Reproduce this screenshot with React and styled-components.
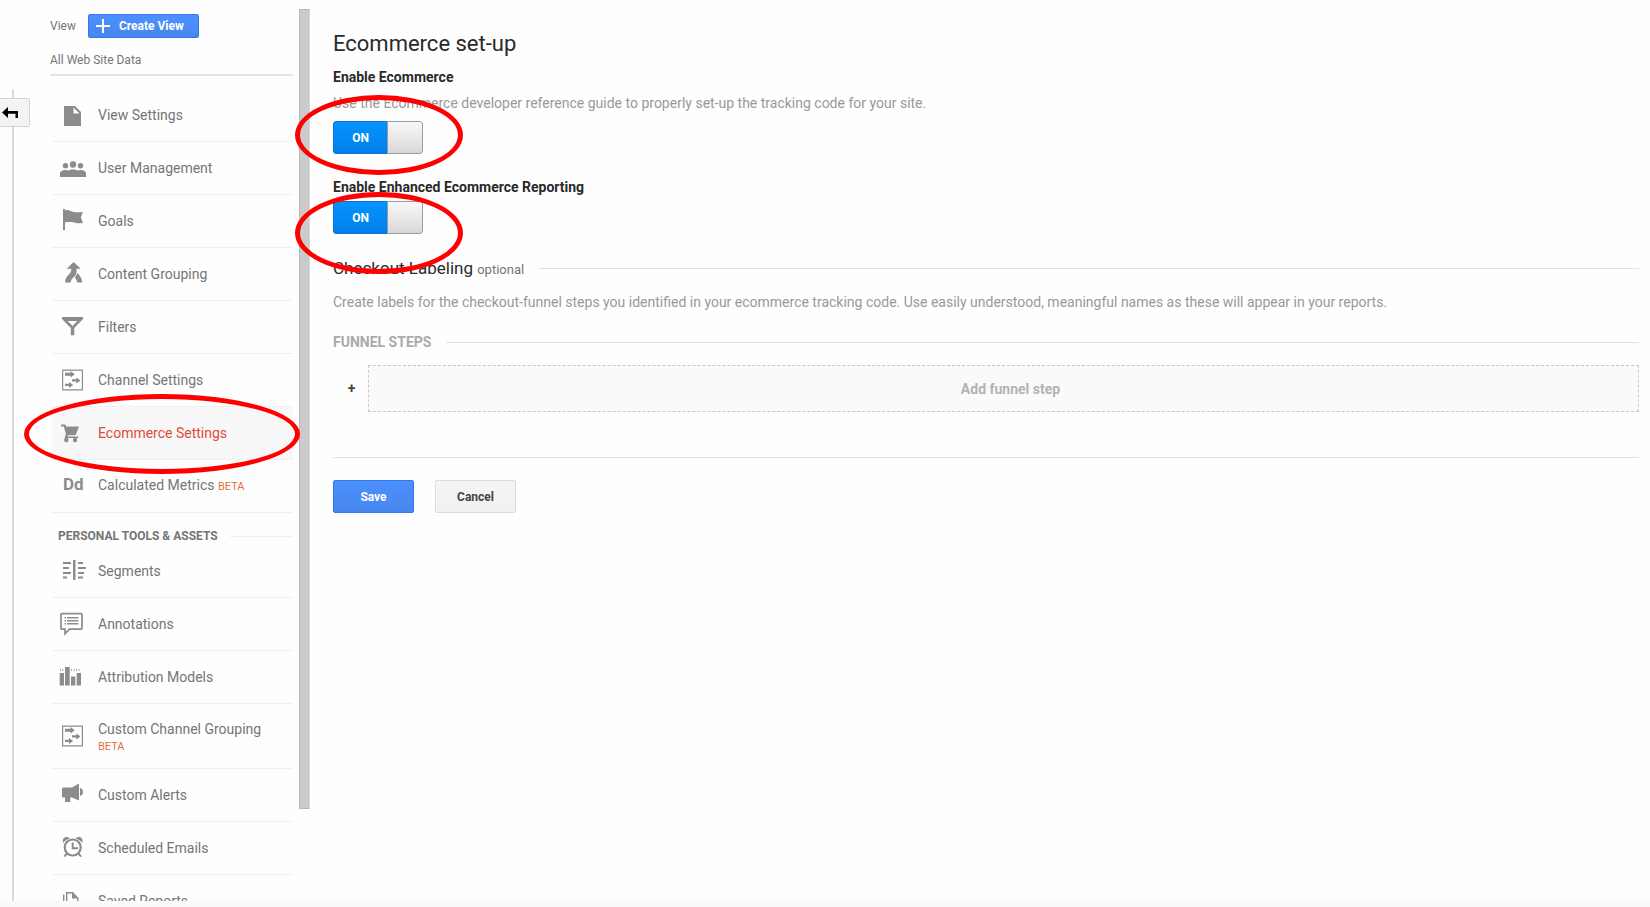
import React, { useState } from "react";
import styled, { createGlobalStyle, css } from "styled-components";

const GlobalStyle = createGlobalStyle`
  * {
    box-sizing: border-box;
  }

  body {
    margin: 0;
    background: #fefefe;
    color: #2a2a2a;
    font-family: Roboto, "Liberation Sans", sans-serif;
    font-size: 14px;
    line-height: 20px;
  }

  button {
    font-family: inherit;
    cursor: pointer;
  }
`;

const Page = styled.div`
  display: grid;
  grid-template-rows: minmax(0, 1fr) 6px;
  height: 100vh;
`;

const Columns = styled.div`
  display: grid;
  grid-template-columns: 30px 243px 11px minmax(0, 1fr);
  min-height: 0;
  overflow: hidden;
`;

const Footer = styled.footer`
  background: #f8f9fb;
`;

/* left rail */

const Rail = styled.div`
  display: flex;
  flex-direction: column;
  padding-top: 89px;
`;

const RailLine = styled.span`
  width: 2px;
  margin-left: 12px;
  background: #dadada;
  flex: ${props => (props.$grow ? "1" : "0 0 9px")};
`;

const BackButton = styled.button`
  display: flex;
  align-items: center;
  height: 29px;
  padding: 0 0 0 2px;
  border: 1px solid #d4d4d4;
  border-left: 0;
  border-radius: 0 2px 2px 0;
  background: #f3f3f3;
`;

/* sidebar */

const Sidebar = styled.aside`
  min-height: 0;
  margin-left: 20px;
  margin-right: -20px;
  padding-top: 14px;
`;

const ViewHeader = styled.div`
  border-bottom: 2px solid #e3e3e3;
  padding-bottom: 6px;
  margin-bottom: 13px;
  color: #757575;
  font-size: 12px;
  line-height: 16px;
`;

const ViewRow = styled.div`
  display: flex;
  align-items: center;
  gap: 12px;
  margin-bottom: 14px;
`;

const CreateButton = styled.button`
  display: flex;
  align-items: center;
  gap: 9px;
  height: 24px;
  padding: 0 14px 0 7px;
  border: 1px solid #3079ed;
  border-radius: 2px;
  background: linear-gradient(#4d90fe, #4787ed);
  color: #fff;
  font-size: 12px;
  font-weight: bold;
`;

const Menu = styled.ul`
  list-style: none;
  margin: 0 0 0 2px;
  padding: 0;
`;

const MenuItem = styled.li`
  position: relative;
  border-bottom: 1px solid #efefef;
  background: ${props => (props.$active ? "#f8f8f8" : "transparent")};
`;

const MenuLink = styled.a`
  display: flex;
  align-items: center;
  gap: 12px;
  height: ${props => (props.$tall ? "64px" : "52px")};
  padding-left: 6px;
  color: ${props => (props.$active ? "#dd4b39" : "#757575")};
  line-height: 18px;
  text-decoration: none;
`;

const MenuText = styled.span`
  padding-top: ${props => (props.$tall ? "4px" : "0")};
`;

const MenuIcon = styled.svg`
  flex: none;
  width: 28px;
  height: 24px;
  overflow: visible;
  fill: #8c8c8c;
`;

const LetterIcon = styled.span`
  flex: none;
  width: 28px;
  padding: 0 0 4px 5px;
  color: #8c8c8c;
  font-size: 17px;
  font-weight: bold;
`;

const Beta = styled.span`
  display: ${props => (props.$block ? "block" : "inline")};
  color: #e2703a;
  font-size: 11px;
`;

const MenuHeading = styled.h2`
  display: flex;
  align-items: center;
  gap: 12px;
  margin: 0 0 0 8px;
  padding: 15px 0 1px;
  color: #757575;
  font-size: 12px;
  line-height: 16px;
  font-weight: bold;

  &::after {
    content: "";
    flex: 1;
    height: 1px;
    background: #efefef;
  }
`;

const ScrollBar = styled.div`
  margin: 9px -26px 92px 26px;
  border: 1px solid #b8b8b8;
  border-right-color: #d8d8d8;
  background: #cbcbcb;
`;

/* settings form */

const Main = styled.main`
  margin-left: 49px;
  padding: 30px 11px 0 0;
`;

const Title = styled.h1`
  margin: 0 0 9px;
  font-size: 22px;
  line-height: 28px;
  font-weight: normal;
`;

const FieldLabel = styled.label`
  display: block;
  font-weight: bold;
`;

const Hint = styled.p`
  margin: 0;
  color: #999;
`;

const Field = styled.div`
  display: flex;
  flex-direction: column;
  align-items: flex-start;
  margin-bottom: 23px;

  ${Hint} {
    margin: 6px 0 4px;
  }
`;

const Switch = styled.span`
  position: relative;
  display: flex;
  width: 90px;
  height: 33px;
  margin-top: 4px;
`;

const SwitchInput = styled.input`
  position: absolute;
  inset: 0;
  width: 100%;
  height: 100%;
  margin: 0;
  opacity: 0;
  cursor: pointer;
`;

const SwitchTrack = styled.span`
  display: flex;
  flex: 1;
  flex-direction: ${props => (props.$on ? "row" : "row-reverse")};
  overflow: hidden;
  border-radius: 3px;
`;

const SwitchText = styled.span`
  flex: 1;
  border: 1px solid #0a74cf;
  border-right: 0;
  border-radius: 3px 0 0 3px;
  background: ${props =>
    props.$on ? "linear-gradient(#0593ff, #0080ea)" : "#aaa"};
  color: #fff;
  font-size: 12px;
  line-height: 32px;
  font-weight: bold;
  text-align: center;
`;

const SwitchKnob = styled.span`
  width: 36px;
  border: 1px solid #999;
  border-radius: 0 3px 3px 0;
  background: linear-gradient(#f8f8f8, #d8d8d8);
`;

const SectionHeading = styled.h2`
  display: flex;
  align-items: center;
  gap: 15px;
  margin: 0;

  &::after {
    content: "";
    flex: 1;
    height: 1px;
    background: #e0e0e0;
  }

  ${props =>
    props.$minor
      ? css`
          color: #aaa;
          font-size: 14px;
          line-height: 20px;
          font-weight: bold;
        `
      : css`
          font-size: 17px;
          line-height: 22px;
          font-weight: normal;
        `}
`;

const Optional = styled.small`
  color: #757575;
  font-size: 13px;
  line-height: 16px;
`;

const Checkout = styled.section`
  display: flex;
  flex-direction: column;
  border-bottom: 1px solid #e0e0e0;
  padding-bottom: 45px;
  margin-bottom: 22px;

  ${Hint} {
    margin: 13px 0 20px;
  }
`;

const StepRow = styled.div`
  display: flex;
  align-items: center;
  margin-top: 13px;
`;

const StepMark = styled.span`
  width: 35px;
  padding: 0 0 2px 2px;
  color: #444;
  text-align: center;
  font-weight: bold;
`;

const AddStep = styled.button`
  flex: 1;
  height: 47px;
  border: 1px dashed #c8c8c8;
  background: #fafafa;
  color: #b3b3b3;
  font-size: 14px;
  font-weight: bold;
  padding-left: 20px;
`;

const Actions = styled.div`
  display: flex;
  gap: 21px;
`;

const Button = styled.button`
  min-width: 81px;
  height: 33px;
  border: 1px solid ${props => (props.$primary ? "#3079ed" : "#dcdcdc")};
  border-radius: 2px;
  background: ${props =>
    props.$primary
      ? "linear-gradient(#4d90fe, #4787ed)"
      : "linear-gradient(#f5f5f5, #f1f1f1)"};
  color: ${props => (props.$primary ? "#fff" : "#444")};
  font-size: 12px;
  font-weight: bold;
`;

/* red ring laid over the part it surrounds */
const Marker = styled.span`
  position: absolute;
  z-index: 2;
  border: 5px solid #fe0000;
  border-radius: 50%;
  pointer-events: none;
  inset: ${props => props.$inset};
`;

const icons = {
  file: <path fillRule="evenodd" d="M6 3h11l6 6v14H6zM15.500 4.500v6h6z" />,
  users: (
    <>
      <circle cx="15" cy="8.500" r="3.200" />
      <circle cx="7.500" cy="9.700" r="2.700" />
      <circle cx="22.500" cy="9.700" r="2.700" />
      <path d="M2 21v-3.500c0-2.200 2.500-3.500 5.500-3.500 1 0 2 .2 2.700.6 1.200-.7 2.800-1.100 4.800-1.100s3.600.4 4.800 1.100c.7-.4 1.700-.6 2.700-.6 3 0 5.500 1.300 5.500 3.500V21z" />
    </>
  ),
  flag: (
    <path d="M5 0h2v1.500c3-1.300 5.500.8 9 1.500 3 .6 6 .3 9 0l-2.200 5.200L25 14c-3 .5-5 .5-9-.5-3-.8-6-.5-9-.2V21H5z" />
  ),
  merge: (
    <>
      <path d="M15.700 0l7 6.700h-4.200v2.500c0 2.500-.9 4.200-2.600 5.900-2 2-3 3-3.200 5.400H7c.2-4 1.500-6 4-8.300 1.600-1.500 2.200-2.700 2.200-4.500v-1H8.700z" />
      <path d="M19.300 11c3 2.700 4.600 5.200 4.800 9.500H19c-.1-2.200-.8-3.600-2.200-5.200 1.200-1.300 1.900-2.600 2.500-4.300z" />
    </>
  ),
  filter: (
    <path
      fillRule="evenodd"
      d="M4 2h21v2l-8.700 9v7.300h-3.500V13L4 4zM9.700 6l4.800 5 4.800-5z"
    />
  ),
  channel: (
    <>
      <path
        fillRule="evenodd"
        d="M4 1.500h21v21H4zM5.200 2.700v18.600h18.600V2.700z"
      />
      <path d="M7 4.700h5.500V3l4.300 3.200-4.300 3.200V7.700H7zM14 11.200h4.300V9.400l4.200 3-4.200 3v-1.800H14zM7 15.700h4v-1.800l4.200 3-4.200 3v-1.800H7z" />
    </>
  ),
  cart: (
    <>
      <path d="M3 3.500h4.200l1 2H21l-3 7.700c-.4.700-.8 1-1.600 1H10l-.7 1.200h11V17H8c-1 0-1.500-.9-1-1.800l1-2-2.200-7.700H3z" />
      <circle cx="8.300" cy="19" r="2.200" />
      <circle cx="17" cy="19" r="2.200" />
    </>
  ),
  segments: (
    <path d="M15 1h2.500v20H15zM5 3h8v2H5zM5 8h6v2H5zM5 13h8v2H5zM5 17.500h4v2H5zM20 3h5v2h-5zM20 8h8v2h-8zM20 13h6v2h-6zM20 17.500h5v2h-5z" />
  ),
  annotation: (
    <>
      <path
        d="M4 1.700h19c.5 0 1 .3 1 .8v13.800c0 .5-.5.900-1 .9H11.500L7 21.700v-4.500H4c-.5 0-1-.4-1-.9V2.500c0-.5.5-.8 1-.8z"
        fill="none"
        stroke="#8c8c8c"
        strokeWidth="1.700"
      />
      <path d="M6.500 5H8v1.500H6.500zM9 5h11.500v1.500H9zM6.500 8H8v1.500H6.500zM9 8h11.500v1.500H9zM6.500 11H8v1.500H6.500zM9 11h11.500v1.500H9z" />
    </>
  ),
  bars: (
    <path d="M1.700 8H6v12.500H1.700zM7 2h4.700v18.500H7zM13 11.500h4.300v9H13zM18.700 8H23v12.500h-4.300zM2 4.300h1v1.400H2zM4.300 4.300h1v1.400h-1zM13 4.300h1v1.400h-1zM15.500 4.300h1v1.400h-1zM18 4.300h1v1.400h-1zM20.500 4.300h1v1.400h-1z" />
  ),
  megaphone: (
    <path d="M5.500 4.500H14l7-4v17L14 14.500h-1.800V19H7v-4.500H5.500c-.9 0-1.500-.5-1.500-1.500V6c0-.9.6-1.500 1.500-1.500zM22 4.700c1.800.6 3 2.200 3 4.200s-1.200 3.600-3 4.200z" />
  ),
  alarm: (
    <>
      <circle cx="14.700" cy="11.500" r="8" fill="none" stroke="#8c8c8c" strokeWidth="2.200" />
      <path d="M13.700 6.500h2v4.700h4.300v2h-6.300z" />
      <path d="M5.200 7C4 3.500 5.700 1 8.500 1c1.500 0 2.700.6 3.400 1.500C9 3.400 6.700 4.800 5.200 7zM24.200 7c1.200-3.500-.5-6-3.300-6-1.500 0-2.700.6-3.400 1.500 2.900.9 5.200 2.300 6.700 4.500zM8 17l1.600 1.500L7 21l-1.500-.8zM21.400 17l-1.600 1.500 2.600 2.500 1.500-.8z" />
    </>
  ),
  reports: (
    <path
      fillRule="evenodd"
      d="M8 3h7l5.500 6v11H8zM9.400 4.400v14.200h9.700V9.500H14V4.400zM5 5.500h1.400v17H17V24H5z"
    />
  )
};

const viewItems = [
  { label: "View Settings", icon: "file" },
  { label: "User Management", icon: "users" },
  { label: "Goals", icon: "flag" },
  { label: "Content Grouping", icon: "merge" },
  { label: "Filters", icon: "filter" },
  { label: "Channel Settings", icon: "channel" },
  { label: "Ecommerce Settings", icon: "cart", active: true },
  { label: "Calculated Metrics", letters: "Dd", beta: "inline" }
];

const personalItems = [
  { label: "Segments", icon: "segments" },
  { label: "Annotations", icon: "annotation" },
  { label: "Attribution Models", icon: "bars" },
  { label: "Custom Channel Grouping", icon: "channel", beta: "block" },
  { label: "Custom Alerts", icon: "megaphone" },
  { label: "Scheduled Emails", icon: "alarm" },
  { label: "Saved Reports", icon: "reports" }
];

const MenuList = ({ items }) => (
  <Menu>
    {items.map(item => (
      <MenuItem key={item.label} $active={item.active}>
        <MenuLink
          href="#"
          $active={item.active}
          $tall={item.beta === "block"}
          aria-current={item.active ? "page" : undefined}
        >
          {item.letters ? (
            <LetterIcon aria-hidden="true">{item.letters}</LetterIcon>
          ) : (
            <MenuIcon viewBox="0 0 28 24" aria-hidden="true">
              {icons[item.icon]}
            </MenuIcon>
          )}
          <MenuText $tall={item.beta === "block"}>
            {item.label}{" "}
            {item.beta && <Beta $block={item.beta === "block"}>BETA</Beta>}
          </MenuText>
        </MenuLink>
        {item.active && <Marker $inset="-13px -7px -15px -28px" />}
      </MenuItem>
    ))}
  </Menu>
);

const Toggle = ({ id, marker }) => {
  const [on, setOn] = useState(true);
  return (
    <Switch>
      <SwitchTrack $on={on}>
        <SwitchText $on={on}>{on ? "ON" : "OFF"}</SwitchText>
        <SwitchKnob />
      </SwitchTrack>
      <SwitchInput
        id={id}
        type="checkbox"
        checked={on}
        onChange={e => setOn(e.target.checked)}
      />
      <Marker $inset={marker} />
    </Switch>
  );
};

const App = () => (
  <Page>
    <GlobalStyle />
    <Columns>
      <Rail>
        <RailLine />
        <BackButton aria-label="Back">
          <svg width="17" height="12" viewBox="0 0 17 12" aria-hidden="true">
            <path d="M0 5.500L6 0v4h10v7h-2.500V6.700H6V11z" />
          </svg>
        </BackButton>
        <RailLine $grow />
      </Rail>

      <Sidebar>
        <ViewHeader>
          <ViewRow>
            <span>View</span>
            <CreateButton>
              <svg width="14" height="14" viewBox="0 0 14 14" aria-hidden="true">
                <path d="M6 0h2v6h6v2H8v6H6V8H0V6h6z" fill="#fff" />
              </svg>
              Create View
            </CreateButton>
          </ViewRow>
          <div>All Web Site Data</div>
        </ViewHeader>
        <MenuList items={viewItems} />
        <MenuHeading>PERSONAL TOOLS &amp; ASSETS</MenuHeading>
        <MenuList items={personalItems} />
      </Sidebar>

      <ScrollBar />

      <Main>
        <Title>Ecommerce set-up</Title>
        <Field>
          <FieldLabel htmlFor="ecommerce">Enable Ecommerce</FieldLabel>
          <Hint>
            Use the Ecommerce developer reference guide to properly set-up the
            tracking code for your site.
          </Hint>
          <Toggle id="ecommerce" marker="-26px -40px -21px -38px" />
        </Field>
        <Field>
          <FieldLabel htmlFor="enhanced">
            Enable Enhanced Ecommerce Reporting
          </FieldLabel>
          <Toggle id="enhanced" marker="-9px -40px -40px -38px" />
        </Field>

        <Checkout>
          <SectionHeading>
            <span>
              Checkout Labeling <Optional>optional</Optional>
            </span>
          </SectionHeading>
          <Hint>
            Create labels for the checkout-funnel steps you identified in your
            ecommerce tracking code. Use easily understood, meaningful names as
            these will appear in your reports.
          </Hint>
          <SectionHeading as="h3" $minor>
            FUNNEL STEPS
          </SectionHeading>
          <StepRow>
            <StepMark>+</StepMark>
            <AddStep>Add funnel step</AddStep>
          </StepRow>
        </Checkout>

        <Actions>
          <Button $primary>Save</Button>
          <Button>Cancel</Button>
        </Actions>
      </Main>
    </Columns>
    <Footer />
  </Page>
);

export default App;
